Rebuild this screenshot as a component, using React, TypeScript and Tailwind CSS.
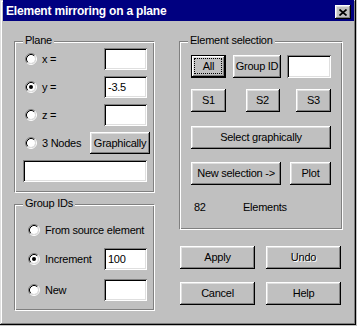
import React from "react";

const font = "font-['Liberation_Sans',Arial,sans-serif]";
const btn =
  "flex items-center justify-center bg-[#c0c0c0] text-black shadow-[inset_-1px_-1px_#000,inset_1px_1px_#fff,inset_-2px_-2px_#808080,inset_2px_2px_#dfdfdf]";
const field =
  "flex items-center bg-white px-[4px] text-black shadow-[inset_1px_1px_#808080,inset_-1px_-1px_#fff,inset_2px_2px_#000,inset_-2px_-2px_#dfdfdf]";
const group =
  "relative border border-t-[#808080] border-l-[#808080] border-r-white border-b-white shadow-[inset_1px_1px_#fff,inset_-1px_-1px_#808080]";
const legend = "absolute -top-[8px] left-[8px] px-[2px] bg-[#c0c0c0] leading-[13px]";

function Radio({ checked }: { checked?: boolean }) {
  return (
    <svg width="12" height="12" viewBox="0 0 12 12" className="shrink-0">
      <circle cx="6" cy="6" r="4" fill="#fff" />
      <path d="M2.11 9.89A5.5 5.5 0 0 1 9.89 2.11" fill="none" stroke="#808080" />
      <path d="M9.89 2.11A5.5 5.5 0 0 1 2.11 9.89" fill="none" stroke="#fff" />
      <path d="M2.82 9.18A4.5 4.5 0 0 1 9.18 2.82" fill="none" stroke="#000" />
      <path d="M9.18 2.82A4.5 4.5 0 0 1 2.82 9.18" fill="none" stroke="#dfdfdf" />
      {checked && <circle cx="6" cy="6" r="2" fill="#000" />}
    </svg>
  );
}

export default function App() {
  return (
    <div className={`w-[357px] h-[326px] bg-[#c0c0c0] ${font} text-[11px] tracking-[-0.25px] text-black`}>
      <div className="w-[356px] h-[325px] flex flex-col shadow-[inset_-1px_-1px_#000,inset_1px_1px_#dfdfdf,inset_-2px_-2px_#808080,inset_2px_2px_#fff]">
        {/* Title bar */}
        <div className="ml-[3px] mr-[2px] h-[21px] bg-[#000080] flex items-start justify-between">
          <div className="pl-[3px] pt-[4px] text-white font-bold text-[12px] tracking-[-0.2px] leading-[15px]">
            Element mirroring on a plane
          </div>
          <div className={`${btn} mt-[5px] mr-[3px] w-[16px] h-[14px]`}>
            <svg width="8" height="7" viewBox="0 0 8 7">
              <path d="M0.5 0.5L7.5 6.5M7.5 0.5L0.5 6.5" stroke="#000" strokeWidth="1.7" fill="none" />
            </svg>
          </div>
        </div>

        <div className="flex pl-[14px] pt-[20px] gap-[24px]">
          {/* Left column */}
          <div className="flex flex-col w-[141px]">
            <div className={`${group} h-[152px] pt-[6px] pl-[10px] flex flex-col gap-[6px]`}>
              <div className={legend}>Plane</div>
              {[
                { l: "x =", v: "", c: false },
                { l: "y =", v: "-3.5", c: true },
                { l: "z =", v: "", c: false },
              ].map((r) => (
                <div key={r.l} className="flex items-center h-[22px]">
                  <Radio checked={r.c} />
                  <span className="ml-[5px] w-[62px]">{r.l}</span>
                  <div className={`${field} w-[43px] h-[22px]`}>{r.v}</div>
                </div>
              ))}
              <div className="flex items-center h-[22px]">
                <Radio />
                <span className="ml-[5px] w-[48px]">3 Nodes</span>
                <div className={`${btn} w-[60px] h-[22px]`}>Graphically</div>
              </div>
              <div className={`${field} ml-[-2px] w-[124px] h-[22px]`}></div>
            </div>

            <div className={`${group} mt-[11px] h-[107px] pt-[14px] pl-[13px] flex flex-col`}>
              <div className={legend}>Group IDs</div>
              <div className="flex items-center h-[22px]">
                <Radio />
                <span className="ml-[5px]">From source element</span>
              </div>
              <div className="flex items-center h-[22px] mt-[7px]">
                <Radio checked />
                <span className="ml-[5px] w-[59px]">Increment</span>
                <div className={`${field} w-[43px] h-[22px]`}>100</div>
              </div>
              <div className="flex items-center h-[22px] mt-[9px]">
                <Radio />
                <span className="ml-[5px] w-[59px]">New</span>
                <div className={`${field} w-[43px] h-[22px]`}></div>
              </div>
            </div>
          </div>

          {/* Right column */}
          <div className="flex flex-col w-[164px]">
            <div className={`${group} h-[189px] pt-[13px] pl-[11px] flex flex-col`}>
              <div className={legend}>Element selection</div>
              <div className="flex items-center h-[23px]">
                <div className="w-[35px] h-[23px] border border-black relative">
                  <div className={`${btn} w-full h-full`}>All</div>
                  <div className="absolute left-[2px] top-[2px] right-[3px] bottom-[3px] border border-dotted border-black pointer-events-none" />
                </div>
                <div className={`${btn} ml-[7px] w-[48px] h-[23px]`}>Group ID</div>
                <div className={`${field} ml-[6px] w-[44px] h-[23px]`}></div>
              </div>
              <div className="flex items-center justify-between w-[140px] h-[23px] mt-[11px]">
                <div className={`${btn} w-[35px] h-[23px]`}>S1</div>
                <div className={`${btn} w-[34px] h-[23px] ml-[3px]`}>S2</div>
                <div className={`${btn} w-[35px] h-[23px]`}>S3</div>
              </div>
              <div className={`${btn} w-[140px] h-[23px] mt-[14px]`}>Select graphically</div>
              <div className="flex items-center justify-between w-[140px] h-[23px] mt-[13px]">
                <div className={`${btn} w-[90px] h-[23px]`}>New selection -&gt;</div>
                <div className={`${btn} w-[41px] h-[23px]`}>Plot</div>
              </div>
              <div className="flex items-center mt-[16px] ml-[3px] leading-[13px]">
                <span className="w-[49px]">82</span>
                <span>Elements</span>
              </div>
            </div>

            <div className="flex gap-[11px] ml-[1px] mt-[16px]">
              <div className={`${btn} w-[75px] h-[23px]`}>Apply</div>
              <div className={`${btn} w-[75px] h-[23px] text-[#808080] [text-shadow:1px_1px_0_#fff]`}>Undo</div>
            </div>
            <div className="flex gap-[11px] ml-[1px] mt-[13px]">
              <div className={`${btn} w-[75px] h-[23px]`}>Cancel</div>
              <div className={`${btn} w-[75px] h-[23px]`}>Help</div>
            </div>
          </div>
        </div>
      </div>
    </div>
  );
}
